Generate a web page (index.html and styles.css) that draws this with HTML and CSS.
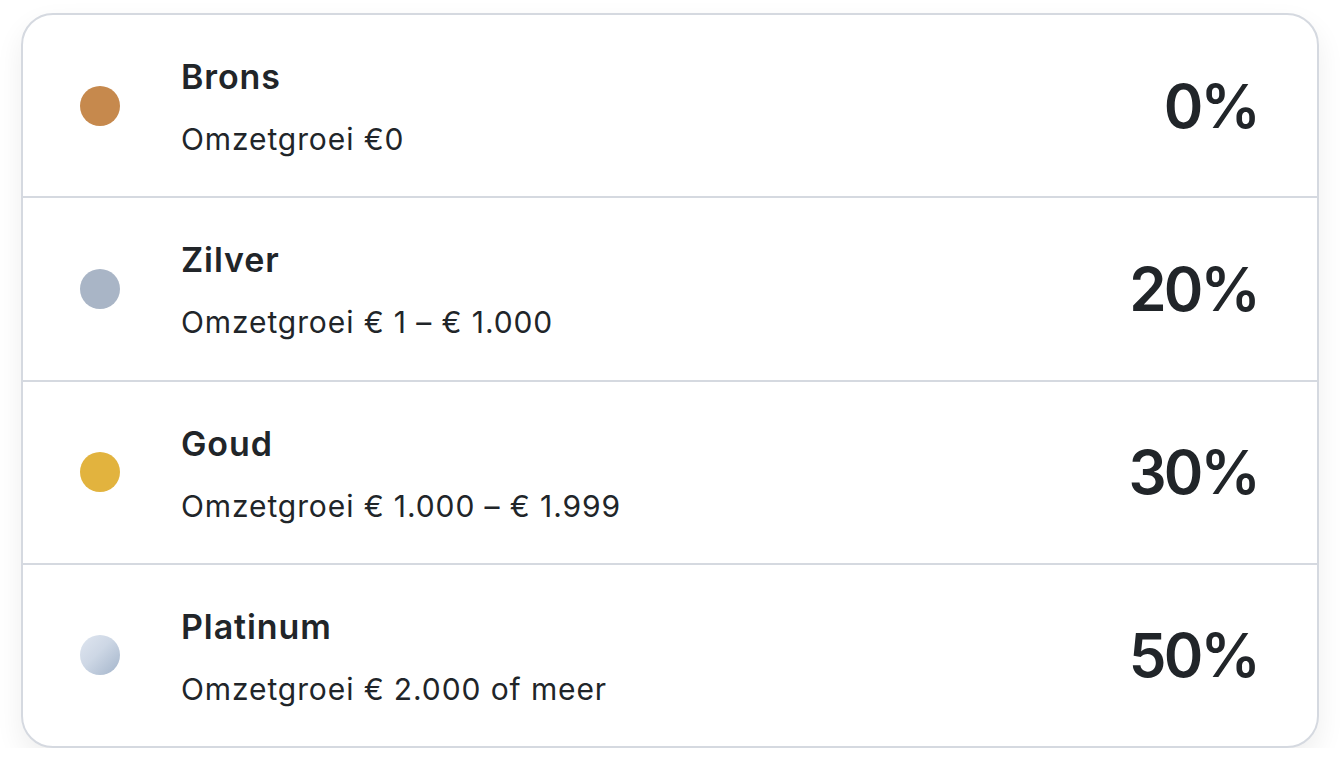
FILE: index.html
```html
<!DOCTYPE html>
<html lang="nl">
<head>
<meta charset="utf-8">
<link rel="stylesheet" href="styles.css">
</head>
<body>
<div class="card">
  <div class="row">
    <span class="dot dot-bronze"></span>
    <div class="info">
      <div class="title">Brons</div>
      <div class="sub">Omzetgroei €0</div>
    </div>
    <div class="pct">0%</div>
  </div>
  <div class="row">
    <span class="dot dot-silver"></span>
    <div class="info">
      <div class="title">Zilver</div>
      <div class="sub">Omzetgroei € 1 – € 1.000</div>
    </div>
    <div class="pct">20%</div>
  </div>
  <div class="row">
    <span class="dot dot-gold"></span>
    <div class="info">
      <div class="title">Goud</div>
      <div class="sub">Omzetgroei € 1.000 – € 1.999</div>
    </div>
    <div class="pct">30%</div>
  </div>
  <div class="row">
    <span class="dot dot-platinum"></span>
    <div class="info">
      <div class="title">Platinum</div>
      <div class="sub">Omzetgroei € 2.000 of meer</div>
    </div>
    <div class="pct">50%</div>
  </div>
</div>
</body>
</html>
```
FILE: styles.css
```css
html, body {
  margin: 0;
  padding: 0;
  background: #ffffff;
}
body {
  font-family: Inter, "Noto Sans", sans-serif;
  color: #212529;
  padding: 13px 21px 0 21px;
}
.card {
  width: 1298px;
  height: 735px;
  box-sizing: border-box;
  border: 2px solid #d5d9e0;
  border-radius: 32px;
  background: #fff;
  box-shadow: 0 12px 28px rgba(0, 0, 0, 0.07);
  display: flex;
  flex-direction: column;
  overflow: hidden;
}
.row {
  flex: 1;
  display: flex;
  align-items: center;
  padding: 0 59px 0 57px;
  border-bottom: 2px solid #d5d9e0;
}
.row:last-child {
  border-bottom: none;
}
.dot {
  width: 40px;
  height: 40px;
  border-radius: 50%;
  flex-shrink: 0;
  margin-right: 61px;
}
.dot-bronze { background: #c6894d; }
.dot-silver { background: #a9b5c6; }
.dot-gold { background: #e2b33e; }
.dot-platinum { background: linear-gradient(135deg, #dfe6f0 0%, #cdd7e5 45%, #a3b4ca 100%); }
.info {
  flex: 1;
  display: flex;
  flex-direction: column;
  gap: 22px;
  padding-top: 5px;
}
.title {
  font-size: 34px;
  font-weight: 600;
  line-height: 40px;
  letter-spacing: 0.9px;
}
.sub {
  font-size: 30px;
  font-weight: 400;
  line-height: 40px;
  letter-spacing: 0.9px;
}
.pct {
  font-size: 60px;
  font-weight: 600;
  line-height: 1;
  letter-spacing: -2.8px;
}
```
